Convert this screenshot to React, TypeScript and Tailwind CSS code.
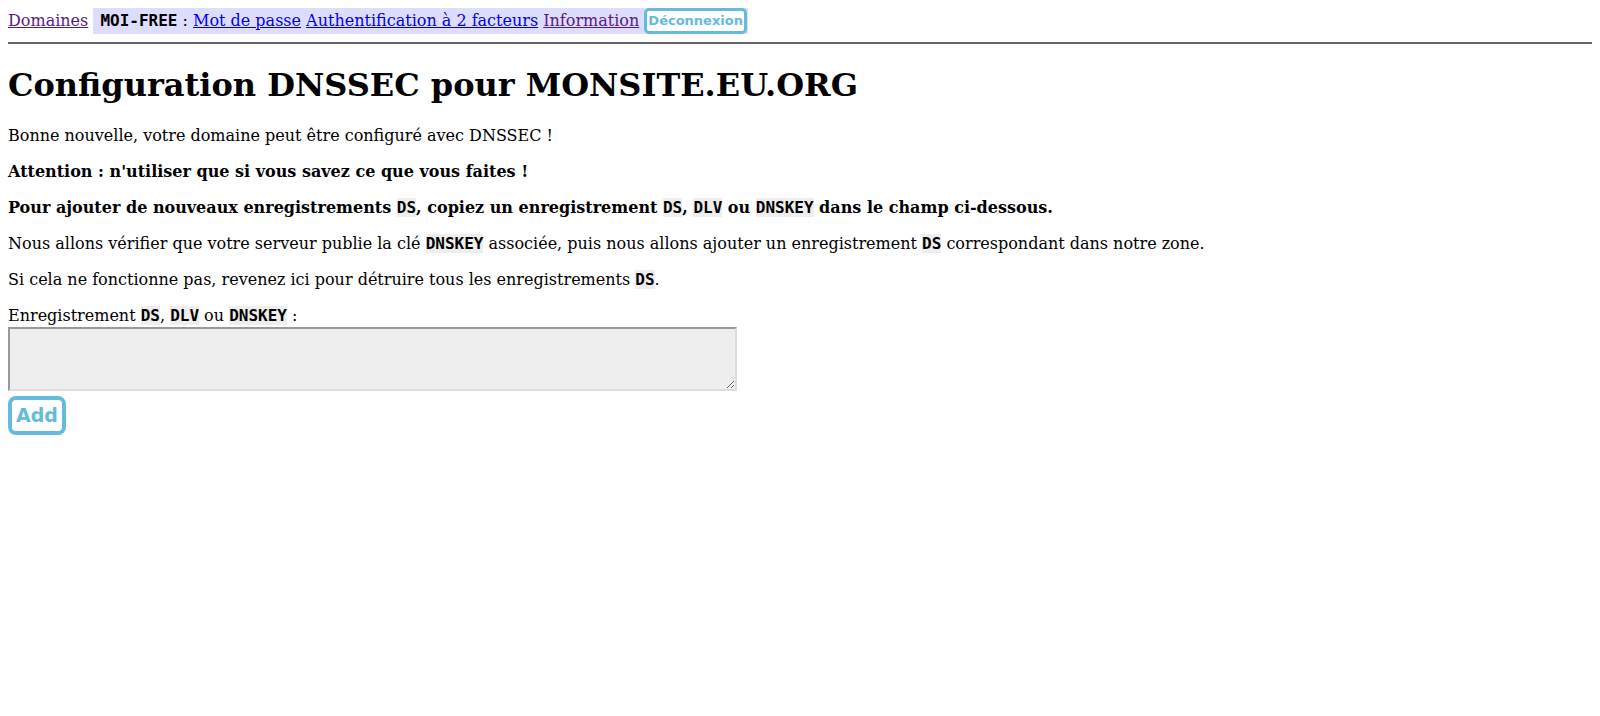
import React from "react";

// inline code token used for record types
function Code({ children }: { children: React.ReactNode }) {
  return (
    <code className="bg-[#eee] font-['DejaVu_Sans_Mono',monospace] text-[16px] font-bold">
      {children}
    </code>
  );
}

function Nav() {
  return (
    <div className="h-[26px] leading-[26px] whitespace-nowrap">
      <a href="#" className="text-[#551a8b] underline">
        Domaines
      </a>{" "}
      <span className="inline-block h-[26px] bg-[#ddf] pl-[7px] pr-px">
        <code className="font-['DejaVu_Sans_Mono',monospace] text-[16px] font-bold">MOI-FREE</code> :{" "}
        <a href="#" className="text-[#00e] underline">
          Mot de passe
        </a>{" "}
        <a href="#" className="text-[#00e] underline">
          Authentification à 2 facteurs
        </a>{" "}
        <a href="#" className="text-[#551a8b] underline">
          Information
        </a>{" "}
        <button className="inline-block h-[26px] align-top rounded-[5px] border-[3px] border-[#66bbdd] bg-white px-px font-['DejaVu_Sans',sans-serif] text-[13px] leading-[20px] font-bold text-[#66bbdd]">
          Déconnexion
        </button>
      </span>
    </div>
  );
}

export default function App() {
  return (
    <div className="min-h-[716px] bg-white p-2 font-['DejaVu_Serif',serif] text-[16px] leading-5 text-black">
      <Nav />
      <hr className="my-2 border-0 h-[2px] bg-[#666]" />

      <h1 className="mt-[22px] mb-[21px] text-[32px] leading-[39px] font-bold">
        Configuration DNSSEC pour MONSITE.EU.ORG
      </h1>

      <p className="my-4">Bonne nouvelle, votre domaine peut être configuré avec DNSSEC !</p>
      <p className="my-4 font-bold">Attention : n'utiliser que si vous savez ce que vous faites !</p>
      <p className="my-4 font-bold">
        Pour ajouter de nouveaux enregistrements <Code>DS</Code>, copiez un enregistrement <Code>DS</Code>,{" "}
        <Code>DLV</Code> ou <Code>DNSKEY</Code> dans le champ ci-dessous.
      </p>
      <p className="my-4">
        Nous allons vérifier que votre serveur publie la clé <Code>DNSKEY</Code> associée, puis nous allons
        ajouter un enregistrement <Code>DS</Code> correspondant dans notre zone.
      </p>
      <p className="my-4">
        Si cela ne fonctionne pas, revenez ici pour détruire tous les enregistrements <Code>DS</Code>.
      </p>

      <form className="my-4" onSubmit={(e) => e.preventDefault()}>
        <div>
          Enregistrement <Code>DS</Code>, <Code>DLV</Code> ou <Code>DNSKEY</Code> :
        </div>
        <textarea className="mt-px block h-[64px] w-[729px] resize border-2 border-t-[#999] border-l-[#999] border-r-[#ddd] border-b-[#ddd] bg-[#eee]" />
        <button
          type="submit"
          className="mt-[5px] block h-[39px] rounded-[8px] border-4 border-[#66bbdd] bg-white px-[4px] font-['DejaVu_Sans',sans-serif] text-[19px] leading-[31px] font-bold text-[#66bbdd]"
        >
          Add
        </button>
      </form>
    </div>
  );
}
